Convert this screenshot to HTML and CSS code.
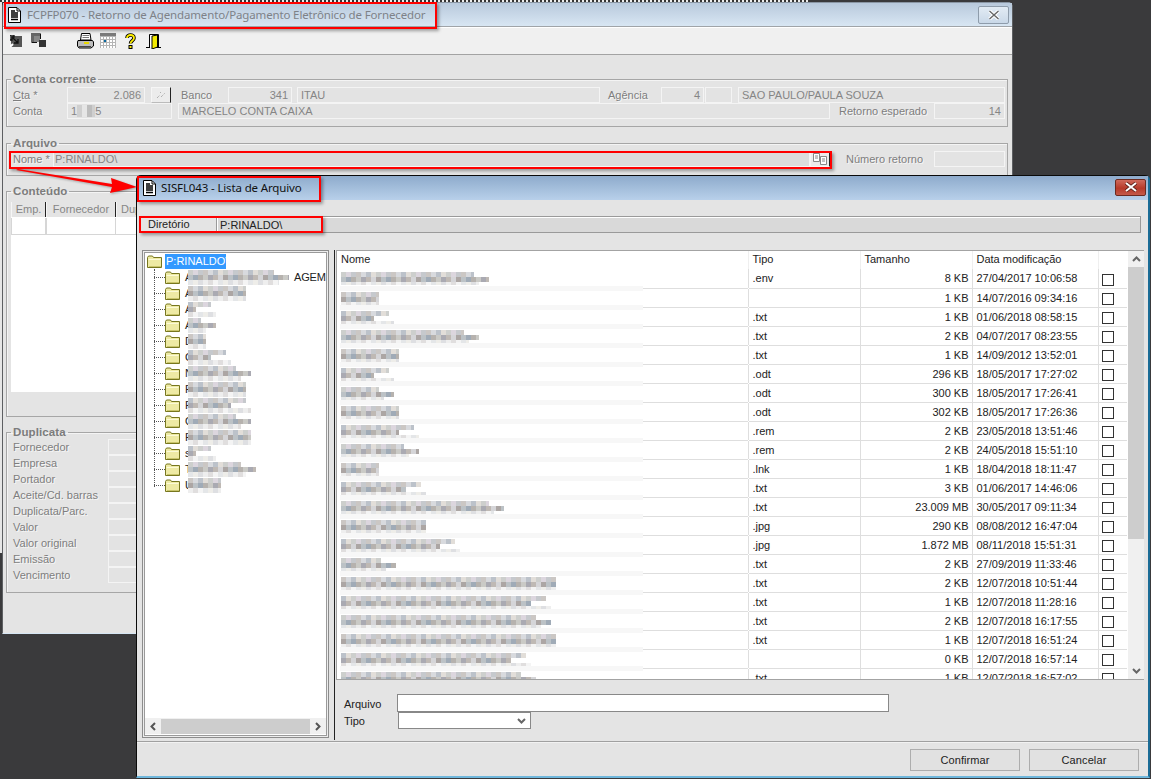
FILE: index.html
```html
<!DOCTYPE html>
<html lang="pt">
<head>
<meta charset="utf-8">
<title>SISFL043 - Lista de Arquivo</title>
<link rel="stylesheet" href="styles.css">
</head>
<body>
<svg class="defs" width="0" height="0" aria-hidden="true">
  <symbol id="doc" viewBox="0 0 13 16">
    <path d="M.5.5H9L12.5 4V15.500H.5Z" fill="#fff" stroke="#000"/>
    <path d="M9 1V4H12" fill="none" stroke="#000"/>
    <path d="M3 4H7M3 6H10M3 8H10M3 10H10M3 12.500H10" stroke="#000" stroke-width="1.300" fill="none"/>
  </symbol>
  <symbol id="folder" viewBox="0 0 15 13">
    <path d="M.5 12.500V2.500L1.500 1H5.500L6.500 2.500H14.500V12.500Z" fill="#eeeaa4" stroke="#77771f"/>
    <path d="M1.500 4.500H13.500" stroke="#fbfad8"/>
    <path d="M2 11.500H14" stroke="#c9c56c"/>
  </symbol>
  <symbol id="chev-up" viewBox="0 0 9 6"><path d="M1 5L4.500 1.500L8 5" fill="none" stroke="#666" stroke-width="2"/></symbol>
  <symbol id="chev-down" viewBox="0 0 9 6"><path d="M1 1L4.500 4.500L8 1" fill="none" stroke="#666" stroke-width="2"/></symbol>
  <symbol id="chev-left" viewBox="0 0 6 9"><path d="M5 1L1.500 4.500L5 8" fill="none" stroke="#555" stroke-width="2"/></symbol>
  <symbol id="chev-right" viewBox="0 0 6 9"><path d="M1 1L4.500 4.500L1 8" fill="none" stroke="#555" stroke-width="2"/></symbol>
</svg>

<div class="desktop">
  <div class="strip-top"></div>
  <div class="strip-left"></div>

  <section class="window back">
    <header class="titlebar back-title">
      <svg class="doc-icon" width="13" height="16"><use href="#doc"/></svg>
      <span class="title-text">FCPFP070 - Retorno de Agendamento/Pagamento Eletrônico de Fornecedor</span>
      <button class="close back-close" aria-label="Fechar">
        <svg width="12" height="10" viewBox="0 0 12 10"><path d="M1.500 1L10.500 9M10.500 1L1.500 9" stroke="#fff" stroke-width="3.500"/><path d="M1.500 1L10.500 9M10.500 1L1.500 9" stroke="#666" stroke-width="1.400"/></svg>
      </button>
    </header>

    <div class="toolbar">
      <svg class="tool t1" width="12" height="12" viewBox="0 0 12 12"><rect x="1" y="1" width="11" height="11" fill="#555"/><path d="M0 0H4V2H2V5H0ZM3 3L8 8M8 4V8H4" fill="none" stroke="#111" stroke-width="1.300"/><path d="M0 12L3 9" stroke="#fff" stroke-width="2"/></svg>
      <svg class="tool t2" width="15" height="14" viewBox="0 0 15 14"><rect x="0" y="0" width="9" height="9" fill="#666"/><rect x="3" y="3" width="6" height="6" fill="#888"/><rect x="8" y="7" width="7" height="7" fill="#333"/><path d="M9 .5H10V6H9ZM.5 9V10H6V9Z" fill="#111"/></svg>
      <svg class="tool t3" width="17" height="16" viewBox="0 0 17 16"><path d="M4.500 .5H13L14 7H3.500Z" fill="#fff" stroke="#000"/><path d="M5.500 2.500H12M5.500 4.500H12" stroke="#777"/><path d="M1 7.500H15.500L16.500 9V13L14 15H2L.5 13V9Z" fill="#bdbdbd" stroke="#000"/><path d="M7 10H12" stroke="#e8d800" stroke-width="2"/><path d="M2 13.500H14" stroke="#444"/></svg>
      <svg class="tool t4" width="16" height="15" viewBox="0 0 16 15"><rect width="16" height="15" fill="#fff"/><rect width="16" height="3" fill="#7b7b7b"/><path d="M0 3.500H16M0 6.500H16M0 9.500H16M0 12.500H16M.5 3V15M3.500 3V15M6.500 3V15M9.500 3V15M12.500 3V15M15.500 3V15" stroke="#b4b4b4"/><rect x="4" y="7" width="2" height="2" fill="#0b6aa0"/></svg>
      <svg class="tool t5" width="11" height="16" viewBox="0 0 11 16"><path d="M2 5C2 1 9 1 9 5C9 8 5.500 7.500 5.500 10.500" fill="none" stroke="#000" stroke-width="3.600"/><path d="M2 5C2 1 9 1 9 5C9 8 5.500 7.500 5.500 10.500" fill="none" stroke="#ffef00" stroke-width="1.800"/><rect x="3.500" y="12" width="4" height="4" fill="#000"/><rect x="4.500" y="13" width="2" height="2" fill="#ffef00"/></svg>
      <svg class="tool t6" width="15" height="15" viewBox="0 0 15 15"><path d="M0 13.500H4M10 13.500H15" stroke="#000"/><path d="M3.500 13V.5H12.500V13" fill="#fff" stroke="#000"/><path d="M6 2L11.500 1V13L6 15Z" fill="#f2ea00" stroke="#000"/></svg>
    </div>

    <div class="back-body">
      <fieldset class="group g-conta">
        <legend>Conta corrente</legend>
        <div class="form-row">
          <label class="lbl w-54"><u>C</u>ta *</label>
          <span class="field num w-78">2.086</span>
          <button class="wand" aria-label="Pesquisar"><svg width="10" height="8" viewBox="0 0 10 8"><path d="M1 7L4 4M5 6L9 2M4 1L5 2" stroke="#999" stroke-dasharray="1 1"/></svg></button>
          <label class="lbl lbl-banco">Banco</label>
          <span class="field num w-64">341</span>
          <span class="field f-itau">ITAU</span>
          <label class="lbl lbl-agencia">Agência</label>
          <span class="field num w-43">4</span>
          <span class="field w-27"></span>
          <span class="field f-sp">SAO PAULO/PAULA SOUZA</span>
        </div>
        <div class="form-row">
          <label class="lbl w-54">Conta</label>
          <span class="field w-105">1<i class="mosaic-inline"></i>5</span>
          <span class="field f-marcelo">MARCELO CONTA CAIXA</span>
          <label class="lbl lbl-retorno">Retorno esperado</label>
          <span class="field num w-71">14</span>
        </div>
      </fieldset>

      <fieldset class="group g-arquivo">
        <legend>Arquivo</legend>
        <div class="form-row">
          <label class="lbl w-40">Nome *</label>
          <span class="field f-nome">P:RINALDO\</span>
          <button class="pick" aria-label="Procurar"><svg width="14" height="12" viewBox="0 0 14 12"><path d="M.5.5H6.500V8.500H.5Z" fill="#fff" stroke="#888"/><path d="M7.500 3.500H13.500V11.500H7.500Z" fill="#fff" stroke="#888"/><path d="M2 3H5M2 5H5M9 6H12M9 8H12" stroke="#888"/></svg></button>
          <label class="lbl lbl-numero">Número retorno</label>
          <span class="field w-71"></span>
        </div>
      </fieldset>

      <fieldset class="group g-conteudo">
        <legend>Conteúdo</legend>
        <div class="grid-area">
          <div class="grid-head">
            <span class="gh gh-emp">Emp.</span>
            <span class="gh gh-forn">Fornecedor</span>
            <span class="gh gh-du">Duplicata</span>
          </div>
          <div class="grid-row">
            <span class="gc gc-emp"></span>
            <span class="gc gc-forn"></span>
          </div>
        </div>
      </fieldset>

      <fieldset class="group g-dup">
        <legend>Duplicata</legend>
        <div class="dup-row"><label class="lbl w-95">Fornecedor</label><span class="field w-60"></span></div>
        <div class="dup-row"><label class="lbl w-95">Empresa</label><span class="field w-60"></span></div>
        <div class="dup-row"><label class="lbl w-95">Portador</label><span class="field w-60"></span></div>
        <div class="dup-row"><label class="lbl w-95">Aceite/Cd. barras</label><span class="field w-60"></span></div>
        <div class="dup-row"><label class="lbl w-95">Duplicata/Parc.</label><span class="field w-60"></span></div>
        <div class="dup-row"><label class="lbl w-95">Valor</label><span class="field w-60"></span></div>
        <div class="dup-row"><label class="lbl w-95">Valor original</label><span class="field w-60"></span></div>
        <div class="dup-row"><label class="lbl w-95">Emissão</label><span class="field w-60"></span></div>
        <div class="dup-row"><label class="lbl w-95">Vencimento</label><span class="field w-60"></span></div>
      </fieldset>
    </div>
  </section>

  <section class="window front">
    <header class="titlebar front-title">
      <svg class="doc-icon" width="13" height="16"><use href="#doc"/></svg>
      <span class="title-text">SISFL043 - Lista de Arquivo</span>
      <button class="close front-close" aria-label="Fechar">
        <svg width="14" height="10" viewBox="0 0 14 10"><path d="M2 1L12 9M12 1L2 9" stroke="#5a2018" stroke-width="3.600"/><path d="M2 1L12 9M12 1L2 9" stroke="#fff" stroke-width="2"/></svg>
      </button>
    </header>

    <div class="dir-row">
      <span class="dir-label">Diretório</span>
      <span class="dir-field">P:RINALDO\</span>
    </div>

    <div class="main">
      <aside class="tree">
        <div class="tree-inner">
          <div class="tree-root">
            <svg width="15" height="13"><use href="#folder"/></svg>
            <span class="selected">P:RINALDO\</span>
          </div>
          <ul class="tree-list">
            <li class="tree-item"><span class="branch"></span><svg width="15" height="13"><use href="#folder"/></svg><span class="initial">A</span><i class="mosaic" style="width:106px"></i><span class="tail">AGEM</span></li>
            <li class="tree-item"><span class="branch"></span><svg width="15" height="13"><use href="#folder"/></svg><span class="initial">A</span><i class="mosaic" style="width:58px"></i></li>
            <li class="tree-item"><span class="branch"></span><svg width="15" height="13"><use href="#folder"/></svg><span class="initial">A</span><i class="mosaic" style="width:33px"></i></li>
            <li class="tree-item"><span class="branch"></span><svg width="15" height="13"><use href="#folder"/></svg><span class="initial">A</span><i class="mosaic" style="width:33px"></i></li>
            <li class="tree-item"><span class="branch"></span><svg width="15" height="13"><use href="#folder"/></svg><span class="initial">D</span><i class="mosaic" style="width:18px"></i></li>
            <li class="tree-item"><span class="branch"></span><svg width="15" height="13"><use href="#folder"/></svg><span class="initial">G</span><i class="mosaic" style="width:48px"></i></li>
            <li class="tree-item"><span class="branch"></span><svg width="15" height="13"><use href="#folder"/></svg><span class="initial">N</span><i class="mosaic" style="width:68px"></i></li>
            <li class="tree-item"><span class="branch"></span><svg width="15" height="13"><use href="#folder"/></svg><span class="initial">P</span><i class="mosaic" style="width:58px"></i></li>
            <li class="tree-item"><span class="branch"></span><svg width="15" height="13"><use href="#folder"/></svg><span class="initial">P</span><i class="mosaic" style="width:68px"></i></li>
            <li class="tree-item"><span class="branch"></span><svg width="15" height="13"><use href="#folder"/></svg><span class="initial">Q</span><i class="mosaic" style="width:68px"></i></li>
            <li class="tree-item"><span class="branch"></span><svg width="15" height="13"><use href="#folder"/></svg><span class="initial">R</span><i class="mosaic" style="width:63px"></i></li>
            <li class="tree-item"><span class="branch"></span><svg width="15" height="13"><use href="#folder"/></svg><span class="initial">s</span><i class="mosaic" style="width:33px"></i></li>
            <li class="tree-item"><span class="branch"></span><svg width="15" height="13"><use href="#folder"/></svg><span class="initial">T</span><i class="mosaic" style="width:73px"></i></li>
            <li class="tree-item"><span class="branch"></span><svg width="15" height="13"><use href="#folder"/></svg><span class="initial">U</span><i class="mosaic" style="width:33px"></i></li>
          </ul>
          <div class="h-scroll">
            <svg class="h-arrow" width="6" height="9"><use href="#chev-left"/></svg>
            <span class="h-thumb"></span>
            <svg class="h-arrow" width="6" height="9"><use href="#chev-right"/></svg>
          </div>
        </div>
      </aside>

      <div class="splitter"></div>

      <div class="right-col">
        <div class="list">
          <div class="table-clip">
            <table class="files">
              <thead>
                <tr><th class="c-nome">Nome</th><th class="c-tipo">Tipo</th><th class="c-tam">Tamanho</th><th class="c-data">Data modificação</th><th class="c-chk"></th></tr>
              </thead>
              <tbody>
                <tr><td class="c-nome"><i class="mosaic" style="width:153px"></i></td><td>.env</td><td class="size">8 KB</td><td>27/04/2017 10:06:58</td><td class="c-chk"><span class="check"></span></td></tr>
                <tr><td class="c-nome"><i class="mosaic" style="width:38px"></i></td><td></td><td class="size">1 KB</td><td>14/07/2016 09:34:16</td><td class="c-chk"><span class="check"></span></td></tr>
                <tr><td class="c-nome"><i class="mosaic" style="width:58px"></i></td><td>.txt</td><td class="size">1 KB</td><td>01/06/2018 08:58:15</td><td class="c-chk"><span class="check"></span></td></tr>
                <tr><td class="c-nome"><i class="mosaic" style="width:143px"></i></td><td>.txt</td><td class="size">2 KB</td><td>04/07/2017 08:23:55</td><td class="c-chk"><span class="check"></span></td></tr>
                <tr><td class="c-nome"><i class="mosaic" style="width:58px"></i></td><td>.txt</td><td class="size">1 KB</td><td>14/09/2012 13:52:01</td><td class="c-chk"><span class="check"></span></td></tr>
                <tr><td class="c-nome"><i class="mosaic" style="width:58px"></i></td><td>.odt</td><td class="size">296 KB</td><td>18/05/2017 17:27:02</td><td class="c-chk"><span class="check"></span></td></tr>
                <tr><td class="c-nome"><i class="mosaic" style="width:58px"></i></td><td>.odt</td><td class="size">300 KB</td><td>18/05/2017 17:26:41</td><td class="c-chk"><span class="check"></span></td></tr>
                <tr><td class="c-nome"><i class="mosaic" style="width:58px"></i></td><td>.odt</td><td class="size">302 KB</td><td>18/05/2017 17:26:36</td><td class="c-chk"><span class="check"></span></td></tr>
                <tr><td class="c-nome"><i class="mosaic" style="width:83px"></i></td><td>.rem</td><td class="size">2 KB</td><td>23/05/2018 13:51:46</td><td class="c-chk"><span class="check"></span></td></tr>
                <tr><td class="c-nome"><i class="mosaic" style="width:83px"></i></td><td>.rem</td><td class="size">2 KB</td><td>24/05/2018 15:51:10</td><td class="c-chk"><span class="check"></span></td></tr>
                <tr><td class="c-nome"><i class="mosaic" style="width:38px"></i></td><td>.lnk</td><td class="size">1 KB</td><td>18/04/2018 18:11:47</td><td class="c-chk"><span class="check"></span></td></tr>
                <tr><td class="c-nome"><i class="mosaic" style="width:90px"></i></td><td>.txt</td><td class="size">3 KB</td><td>01/06/2017 14:46:06</td><td class="c-chk"><span class="check"></span></td></tr>
                <tr><td class="c-nome"><i class="mosaic" style="width:168px"></i></td><td>.txt</td><td class="size">23.009 MB</td><td>30/05/2017 09:11:34</td><td class="c-chk"><span class="check"></span></td></tr>
                <tr><td class="c-nome"><i class="mosaic" style="width:85px"></i></td><td>.jpg</td><td class="size">290 KB</td><td>08/08/2012 16:47:04</td><td class="c-chk"><span class="check"></span></td></tr>
                <tr><td class="c-nome"><i class="mosaic" style="width:124px"></i></td><td>.jpg</td><td class="size">1.872 MB</td><td>08/11/2018 15:51:31</td><td class="c-chk"><span class="check"></span></td></tr>
                <tr><td class="c-nome"><i class="mosaic" style="width:60px"></i></td><td>.txt</td><td class="size">2 KB</td><td>27/09/2019 11:33:46</td><td class="c-chk"><span class="check"></span></td></tr>
                <tr><td class="c-nome"><i class="mosaic" style="width:215px"></i></td><td>.txt</td><td class="size">2 KB</td><td>12/07/2018 10:51:44</td><td class="c-chk"><span class="check"></span></td></tr>
                <tr><td class="c-nome"><i class="mosaic" style="width:215px"></i></td><td>.txt</td><td class="size">1 KB</td><td>12/07/2018 11:28:16</td><td class="c-chk"><span class="check"></span></td></tr>
                <tr><td class="c-nome"><i class="mosaic" style="width:215px"></i></td><td>.txt</td><td class="size">2 KB</td><td>12/07/2018 16:17:55</td><td class="c-chk"><span class="check"></span></td></tr>
                <tr><td class="c-nome"><i class="mosaic" style="width:215px"></i></td><td>.txt</td><td class="size">1 KB</td><td>12/07/2018 16:51:24</td><td class="c-chk"><span class="check"></span></td></tr>
                <tr><td class="c-nome"><i class="mosaic" style="width:195px"></i></td><td></td><td class="size">0 KB</td><td>12/07/2018 16:57:14</td><td class="c-chk"><span class="check"></span></td></tr>
                <tr><td class="c-nome"><i class="mosaic" style="width:200px"></i></td><td>.txt</td><td class="size">1 KB</td><td>12/07/2018 16:57:02</td><td class="c-chk"><span class="check"></span></td></tr>
              </tbody>
            </table>
          </div>
          <div class="v-scroll">
            <svg class="v-arrow" width="9" height="6"><use href="#chev-up"/></svg>
            <span class="v-thumb"></span>
            <svg class="v-arrow v-arrow-down" width="9" height="6"><use href="#chev-down"/></svg>
          </div>
        </div>
        <div class="file-form">
          <label class="form-label">Arquivo</label>
          <span class="text-input"></span>
          <label class="form-label">Tipo</label>
          <span class="select-box"><svg width="9" height="6"><use href="#chev-down"/></svg></span>
        </div>
      </div>
    </div>

    <footer class="footer">
      <button class="btn">Confirmar</button>
      <button class="btn">Cancelar</button>
    </footer>
  </section>

  <div class="mark mark-title"></div>
  <div class="mark mark-nome"></div>
  <div class="mark mark-lista"></div>
  <div class="mark mark-dir"></div>
  <svg class="arrow" width="126" height="30" viewBox="0 0 126 30"><path d="M0 1L2 0L96 15L95 9L121 18L94 24L96 18Z" fill="#f00"/></svg>
</div>
</body>
</html>
```
FILE: styles.css
```css
* { box-sizing: border-box; }
html, body { margin: 0; height: 100%; }
body {
  background: #3a3a3c;
  font: 11px/14px "Liberation Sans", Arial, sans-serif;
  color: #1c1c1c;
  overflow: hidden;
}
.defs { position: absolute; }
button { font: inherit; padding: 0; }
i { font-style: normal; }
svg { flex: none; }

.desktop { position: relative; width: 1151px; height: 779px; overflow: hidden; }
.strip-top {
  position: absolute; left: 0; top: 0; width: 810px; height: 2px;
  background: repeating-linear-gradient(90deg, #333 0 2px, #eee 2px 4px);
}
.strip-left { position: absolute; left: 0; top: 2px; width: 2px; height: 551px; background: #e6e6e6; }

.window { position: absolute; background: #e4e4e4; display: flex; flex-direction: column; }
.titlebar { display: flex; align-items: center; flex: none; }
.title-text { white-space: nowrap; font-family: "Noto Sans", "Open Sans", sans-serif; font-size: 11.500px; letter-spacing: -.14px; }
.close { border-radius: 2px; display: flex; align-items: center; justify-content: center; margin-left: auto; }

/* back window */
.back {
  left: 2px; top: 2px; width: 1011px; height: 632px;
  border: 1px solid #5d5f62; border-top-color: #8b97a5; border-bottom: 1px solid #d6e6f4; border-radius: 5px 5px 0 0;
}
.back-title {
  height: 24px; padding-left: 5px; padding-right: 3px;
  background: linear-gradient(#b8c9dc, #d8e6f3);
  border-bottom: 1px solid #a0a4a8;
}
.back-title .title-text { margin-left: 6px; color: #7e8288; }
.back-close { width: 31px; height: 18px; background: linear-gradient(#e2ebf4, #c9d8e8); border: 1px solid #8e9cab; margin-top: 1px; }
.toolbar {
  height: 28px; flex: none; background: #f0f0f0; border-bottom: 1px solid #a3a3a3;
  border-top: 1px solid #fff; display: flex; align-items: center;
}
.tool { flex: none; }
.t1 { margin-left: 7px; }
.t2 { margin-left: 9px; margin-top: -2px; }
.t3 { margin-left: 31px; }
.t4 { margin-left: 6px; margin-top: -1px; }
.t5 { margin-left: 9px; }
.t6 { margin-left: 10px; }

.back-body { flex: 1; color: #808080; padding: 17px 4px 0 3px; }
.group {
  margin: 0; padding: 0 0 0 6px; border: 1px solid #a6a6a6; min-width: 0;
  box-shadow: inset 1px 1px 0 #f4f4f4;
}
.group legend {
  padding: 0 2px; margin-left: -2px; font-weight: bold; font-size: 11.500px; line-height: 14px;
  color: #7c7c7c; letter-spacing: .1px;
}
.g-conta { height: 55px; }
.g-arquivo { height: 40px; margin-top: 9px; }
.g-conteudo { height: 233px; margin-top: 8px; padding-left: 4px; }
.g-conteudo legend { margin-left: 0; }
.g-dup { height: 168px; margin-top: 8px; }
.g-conta .form-row:first-of-type { margin-top: 1px; }
.g-arquivo .form-row { margin-top: 1px; }

.form-row { display: flex; align-items: center; height: 16px; white-space: nowrap; }
.lbl { flex: none; color: #7e7e7e; text-shadow: 1px 1px 0 #f6f6f6; }
.field {
  flex: none; display: block; height: 16px; line-height: 15px; padding: 0 3px;
  border: 1px solid #f4f4f4; background: #e3e3e3; color: #858585; font-size: 11px; overflow: hidden; white-space: nowrap;
}
.num { text-align: right; }
.w-40 { width: 40px; } .w-54 { width: 54px; } .w-95 { width: 95px; }
.w-27 { width: 27px; margin-left: 1px; } .w-43 { width: 43px; } .w-60 { width: 60px; }
.w-64 { width: 64px; } .w-71 { width: 71px; } .w-78 { width: 78px; } .w-105 { width: 105px; }
.lbl-banco { width: 47px; margin-left: 10px; }
.f-itau { width: 303px; margin-left: 5px; }
.lbl-agencia { width: 53px; margin-left: 8px; }
.f-sp { width: 267px; margin-left: 6px; }
.f-marcelo { width: 652px; margin-left: 6px; }
.lbl-retorno { width: 95px; margin-left: 9px; }
.f-nome { width: 757px; background: #dcdcdc; padding-left: 1px; }
.lbl-numero { width: 88px; margin-left: 16px; }
.wand { width: 20px; height: 16px; margin-left: 6px; background: #ececec; border: 1px solid #f6f6f6; border-right-color: #222; border-bottom-color: #bbb; display: flex; align-items: center; justify-content: center; }
.pick { width: 20px; height: 16px; background: #ececec; border: 1px solid #f6f6f6; border-right-color: #222; display: flex; align-items: center; justify-content: center; }
.mosaic-inline {
  display: inline-block; width: 18px; height: 12px; vertical-align: -2px;
  background: repeating-linear-gradient(90deg, #cfcfcf 0 5px, #e6e6e6 5px 10px, #bdbdbd 10px 15px);
}

.grid-area { height: 190px; margin-top: 4px; background: #fff; overflow: hidden; width: 400px; }
.grid-head { display: flex; height: 16px; background: #e4e4e4; border-bottom: 1px solid #fff; }
.gh { flex: none; text-align: center; line-height: 15px; color: #868686; border-right: 1px solid #222; border-left: 1px solid #f6f6f6; }
.gh-emp { width: 35px; } .gh-forn { width: 70px; } .gh-du { width: 70px; text-align: left; padding-left: 4px; }
.grid-row { display: flex; height: 17px; border-bottom: 1px solid #d6d6d6; }
.gc { flex: none; border-right: 1px solid #d6d6d6; border-left: 1px solid #d6d6d6; }
.gc-emp { width: 35px; } .gc-forn { width: 70px; }

.dup-row { display: flex; height: 16px; align-items: center; }

/* front window */
.front {
  left: 136px; top: 175px; width: 1014px; height: 603px;
  border: 1px solid #0a0a0a; border-right: 2px solid #1b6c96; border-bottom: 2px solid #6fb7dc; border-radius: 5px 5px 0 0;
}
.front-title {
  height: 24px; padding-left: 6px; padding-right: 2px;
  background: linear-gradient(#8eabcc, #b8d0ea);
}
.front-title .title-text { margin-left: 5px; color: #111; }
.front-close { width: 31px; height: 17px; background: linear-gradient(#cf6a5c, #b73a2a 55%, #c45a4a); border: 1px solid #6c2a20; margin-top: -2px; }

.dir-row { display: flex; height: 17px; margin: 16px 0 0 3px; flex: none; }
.dir-label { width: 76px; padding-left: 8px; line-height: 16px; color: #222; }
.dir-field {
  width: 925px; background: #d9d9d9; border: 1px solid #f6f6f6; outline: 1px solid #9a9a9a; outline-offset: -1px;
  box-shadow: inset 1px 1px 0 #fff; padding-left: 3px; line-height: 16px; font-size: 11px; color: #222;
}

.main { display: flex; align-items: flex-start; margin: 17px 0 0 5px; height: 490px; flex: none; }
.tree { width: 187px; height: 488px; flex: none; border: 1px solid #8c8c8c; padding: 1px; background: #ededed; }
.tree-inner { height: 100%; border: 1px solid #9a9a9a; background: #fff; display: flex; flex-direction: column; }
.tree-root { display: flex; align-items: center; height: 16px; padding-left: 2px; flex: none; margin-top: 0; }
.selected { background: #3399ff; color: #fff; padding: 0 1px; margin-left: 3px; height: 15px; line-height: 15px; width: 61px; white-space: nowrap; }
.tree-list { list-style: none; margin: 0; padding: 0; position: relative; flex: 1; overflow: hidden; }
.tree-list::before { content: ""; position: absolute; left: 9px; top: 0; height: 218px; border-left: 1px dotted #555; }
.tree-item { display: flex; align-items: center; height: 16px; padding-left: 9px; white-space: nowrap; }
.branch { width: 11px; border-top: 1px dotted #555; flex: none; }
.initial { margin-left: 5px; color: #222; width: 7px; flex: none; margin-right: -4px; }
.tail { margin-left: 0; color: #222; letter-spacing: -.2px; }
.tree-item .mosaic { height: 15px; flex: none; margin-left: 0; position: relative; }

.h-scroll { height: 16px; flex: none; background: #f0f0f0; display: flex; align-items: center; margin-bottom: 1px; }
.h-arrow { flex: none; margin: 0 5px; }
.h-thumb { flex: 1; height: 15px; background: #cdcdcd; }

.splitter { width: 1px; height: 490px; background: #222; margin-left: 5px; flex: none; }
.right-col { margin-left: 1px; width: 808px; flex: none; }
.list { height: 430px; border: 1px solid #a3a3a3; display: flex; background: #fff; }
.table-clip { width: 790px; height: 428px; overflow: hidden; flex: none; }
.files { border-collapse: collapse; table-layout: fixed; width: 790px; }
.files th, .files td {
  height: 19px; padding: 0 3px 0 4px; font-weight: normal; text-align: left; white-space: nowrap;
  border-right: 1px solid #dedede; border-bottom: 1px solid #dedede; overflow: hidden; color: #222;
}
.files th { height: 18px; padding-bottom: 2px; border-bottom: 0; border-right-color: #efefef; }
.files tbody tr:last-child td { border-bottom: 0; }
.c-nome { width: 411px; }
.c-tipo { width: 112px; }
.c-tam { width: 112px; }
.c-data { width: 126px; }
.c-chk { width: 29px; }
.files td.c-chk { padding: 0; text-align: left; border-right: 0; }
.files th.c-chk { border-right: 0; }
.files td.size { text-align: right; padding-right: 3px; }
.files td.c-nome { position: relative; overflow: visible; border-bottom-color: #fff; }
.files td.c-nome::after {
  content: ""; position: absolute; left: 3px; bottom: -3px; width: 303px; height: 5px; background: #f7f7f7;
}
.files td.c-nome::before {
  content: ""; position: absolute; left: 306px; right: 0; bottom: -1px; height: 1px; background: #dedede;
}
.check { display: block; width: 12px; height: 12px; margin: 3px 0 0 3px; border: 1px solid #333; background: #fff; }
.v-scroll { width: 16px; flex: none; background: #f0f0f0; display: flex; flex-direction: column; align-items: center; margin-left: 1px; }
.v-arrow { flex: none; margin: 5px 0; }
.v-arrow-down { margin-top: auto; margin-bottom: 5px; }
.v-thumb { width: 16px; height: 272px; background: #cdcdcd; flex: none; }

.mosaic {
  display: block; height: 13px;
  background-repeat: no-repeat;
  background-size: 100% 5px, 100% 5px, 100% 5px;
  background-position: 0 0, 0 5px, 0 10px;
  background-image:
    repeating-linear-gradient(90deg, #cbc7c4 0 5px, #d8dade 5px 10px, #bcc2ca 10px 15px, #e2ded9 15px 20px, #cdcfcd 20px 25px, #dcd6de 25px 30px, #c6c9cd 30px 35px),
    repeating-linear-gradient(90deg, #aca6a4 0 5px, #bcc2c6 5px 10px, #a0abb7 10px 15px, #b6b2ae 15px 20px, #cacac6 20px 25px, #aaaab2 25px 30px, #bfb9b4 30px 35px, #d5d5d8 35px 40px),
    repeating-linear-gradient(90deg, #eeeeee 0 5px, #e0dede 5px 10px, #f4f4f4 10px 15px, #e4e6e8 15px 20px, #eeede9 20px 25px, #dedfe2 25px 30px);
}
.files .mosaic { margin-top: 1px; }
tbody tr:nth-child(3n) .mosaic, .tree-item:nth-child(3n) .mosaic { background-position: -10px 0, -25px 5px, -5px 10px; }
tbody tr:nth-child(3n+1) .mosaic, .tree-item:nth-child(3n+1) .mosaic { background-position: -20px 0, -5px 5px, -15px 10px; }

.file-form {
  display: grid; grid-template-columns: 53px 493px; grid-template-rows: 17px 17px;
  margin-top: 15px; padding-left: 8px; align-items: center;
}
.form-label { color: #222; }
.text-input { display: block; height: 18px; background: #fff; border: 1px solid #888; margin-top: -1px; width: 492px; }
.select-box {
  display: flex; align-items: center; justify-content: flex-end; padding-right: 4px; margin-left: 1px;
  width: 133px; height: 17px; background: #fff; border: 1px solid #888;
}

.footer {
  flex: 1; margin-top: 1px; border-top: 1px solid #a0a0a0; box-shadow: inset 0 1px 0 #f2f2f2;
  display: flex; justify-content: flex-end; gap: 9px; padding: 7px 9px 0 0;
}
.btn {
  width: 110px; height: 22px; background: #e1e1e1; border: 1px solid #adadad; color: #222; letter-spacing: .1px;
}

/* red annotations drawn over the screenshot */
.mark { position: absolute; border: 2px solid #f00; box-shadow: 2px 2px 3px rgba(0,0,0,.35); }
.mark-title { left: 4px; top: 2px; width: 433px; height: 27px; }
.mark-nome { left: 9px; top: 151px; width: 823px; height: 18px; }
.mark-lista { left: 137px; top: 176px; width: 184px; height: 26px; }
.mark-dir { left: 139px; top: 216px; width: 184px; height: 17px; }
.arrow { position: absolute; left: 16px; top: 169px; filter: drop-shadow(1px 1px 1px rgba(0,0,0,.3)); }
```
